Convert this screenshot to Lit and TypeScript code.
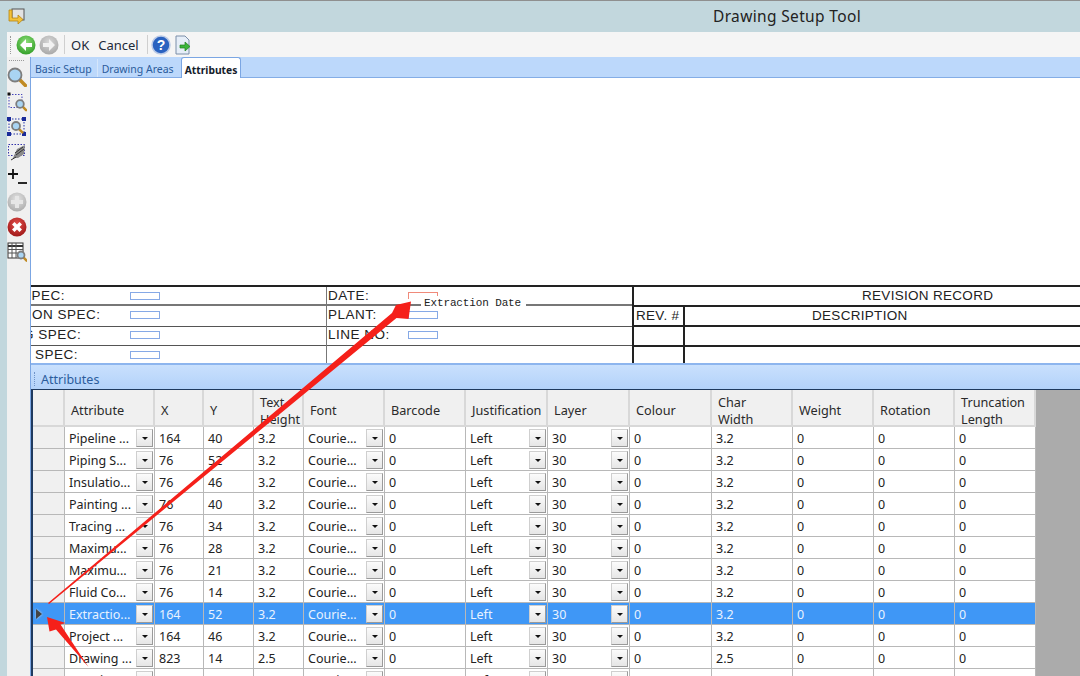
import { LitElement, html, css, svg } from 'lit'
import { customElement } from 'lit/decorators.js'
import { classMap } from 'lit/directives/class-map.js'

const rows = [
  ['Pipeline ...', '164', '40', '3.2'],
  ['Piping S...', '76', '52', '3.2'],
  ['Insulatio...', '76', '46', '3.2'],
  ['Painting ...', '76', '40', '3.2'],
  ['Tracing ...', '76', '34', '3.2'],
  ['Maximu...', '76', '28', '3.2'],
  ['Maximu...', '76', '21', '3.2'],
  ['Fluid Co...', '76', '14', '3.2'],
  ['Extractio...', '164', '52', '3.2'],
  ['Project ...', '164', '46', '3.2'],
  ['Drawing ...', '823', '14', '2.5'],
  ['Drawing ...', '823', '21', '2.5']
]

const SELECTED = 8

const ball = (a: string, b: string, glyph: unknown, size = 20) => html`
  <svg width=${size} height=${size} viewBox="0 0 20 20">
    <defs>
      <radialGradient id="g${a.slice(1)}" cx="50%" cy="35%" r="70%">
        <stop offset="0" stop-color=${a}></stop>
        <stop offset="1" stop-color=${b}></stop>
      </radialGradient>
    </defs>
    <circle cx="10" cy="10" r="9.500" fill="url(#g${a.slice(1)})"></circle>
    ${glyph}
  </svg>
`

const arrowLeft = svg`<path d="M4 10l6-6v4h6v4h-6v4z" fill="#fff"/>`
const arrowRight = svg`<path d="M16 10l-6-6v4H4v4h6v4z" fill="#f2f2f2"/>`
const plus = svg`<path d="M8 4h4v4h4v4h-4v4H8v-4H4V8h4z" fill="#e6e6e6"/>`
const cross = svg`<path d="M5 7.500L7.500 5 10 7.500 12.500 5 15 7.500 12.500 10 15 12.500 12.500 15 10 12.500 7.500 15 5 12.500 7.500 10z" fill="#fff"/>`

const lens = (cx: number, cy: number, r: number, w = 3) => svg`
  <path d="M${cx + r * 0.7} ${cy + r * 0.7}L${cx + r * 1.6} ${cy + r * 1.6}" stroke="#c08a22" stroke-width=${w} stroke-linecap="round"/>
  <circle cx=${cx} cy=${cy} r=${r} fill="#a9d4f2" stroke="#7d7d7d" stroke-width="1.800"/>
`

@customElement('app-root')
export class AppRoot extends LitElement {
  static styles = css`
    :host {
      display: flex;
      flex-direction: column;
      position: relative;
      width: 1080px;
      height: 676px;
      overflow: hidden;
      background: #c2d7dd;
      font-family: "Noto Sans", sans-serif;
      font-size: 12.5px;
      color: #222;
    }
    .titlebar {
      height: 31px;
      flex: none;
      display: flex;
      align-items: center;
      border-top: 1px solid #8f8f8f;
      padding-left: 8px;
    }
    .title {
      position: absolute;
      left: 713px;
      top: 5px;
      font-size: 15.5px;
      color: #222;
      letter-spacing: 0.35px;
    }
    .body {
      flex: 1;
      min-height: 0;
      display: flex;
      flex-direction: column;
      margin-left: 7px;
      background: #f0f0f0;
    }
    .toolbar {
      height: 25px;
      flex: none;
      display: flex;
      align-items: center;
      padding-left: 3px;
      background: #f5f5f5;
      gap: 3px;
    }
    .grip {
      width: 1px;
      height: 18px;
      border-left: 1px dotted #999;
      margin-right: 1px;
    }
    .sep {
      width: 1px;
      height: 19px;
      background: #cfcfcf;
      margin: 0 2px;
    }
    .sep.second {
      margin: 0 0 0 4px;
    }
    .toolbar span {
      font-size: 13px;
      color: #1d2a3a;
      padding: 0 1px;
    }
    .toolbar span.cancel {
      margin-left: 4px;
    }
    .main {
      flex: 1;
      min-height: 0;
      display: flex;
    }
    .side {
      width: 23px;
      flex: none;
      box-sizing: border-box;
      display: flex;
      flex-direction: column;
      align-items: center;
      padding: 10px 3px 0 0;
      gap: 5px;
      background: #f0f0f0;
      position: relative;
    }
    .side::before {
      content: '';
      position: absolute;
      left: 2px;
      top: 3px;
      width: 15px;
      border-top: 1px dotted #999;
    }
    .side svg {
      flex: none;
    }
    .content {
      flex: 1;
      min-width: 0;
      display: flex;
      flex-direction: column;
      border-left: 1px solid #7ba6e3;
    }
    .tabs {
      height: 21px;
      flex: none;
      display: flex;
      align-items: flex-end;
      background: #bcd8fb;
      border-bottom: 1px solid #84ade6;
      box-sizing: border-box;
      padding-left: 4px;
      font-size: 10.5px;
    }
    .tab {
      height: 18px;
      padding: 0 5px 0 0;
      margin-right: 4px;
      border-right: 1px solid #d5e6fb;
      color: #2b5c9c;
      line-height: 21px;
    }
    .tab.last {
      border-right: none;
      margin-right: 2px;
    }
    .tab.active {
      height: 21px;
      margin-bottom: -1px;
      box-sizing: border-box;
      padding: 0 3px;
      background: #fff;
      border: 1px solid #7ba6e3;
      border-bottom: none;
      border-radius: 3px 3px 0 0;
      color: #15202b;
      font-weight: 700;
      font-size: 10.3px;
      line-height: 25px;
    }
    .canvas {
      height: 207px;
      flex: none;
      background: #fff;
    }
    .sheet {
      height: 78px;
      flex: none;
      display: grid;
      grid-template-columns: 295px 308px 1fr;
      background: #fff;
      border-top: 2px solid #222;
      box-sizing: border-box;
      font-family: "Liberation Sans", sans-serif;
      font-size: 13.5px;
      color: #222;
      overflow: hidden;
    }
    .sheet-col {
      display: flex;
      flex-direction: column;
      min-width: 0;
    }
    .sheet-col.mid {
      border-left: 1px solid #777;
      border-right: 2px solid #222;
      box-sizing: border-box;
    }
    .sheet-row {
      height: 19px;
      box-sizing: border-box;
      flex: none;
      display: flex;
      align-items: center;
      border-bottom: 1px solid #555;
      position: relative;
      white-space: nowrap;
    }
    .sheet-row:nth-child(1) {
      border-bottom: 2px solid #777;
    }
    .sheet-row:nth-child(2) {
      height: 21px;
      padding-bottom: 3px;
    }
    .sheet-row:nth-child(3) {
      height: 19px;
      padding-bottom: 3px;
    }
    .sheet-row:last-child {
      height: 17px;
      border-bottom: none;
    }
    .label {
      width: 99px;
      flex: none;
      overflow: hidden;
      letter-spacing: 0.5px;
    }
    .label span {
      display: inline-block;
    }
    .field {
      width: 28px;
      height: 6px;
      flex: none;
      border: 1px solid #86a9e6;
      background: #fff;
    }
    .field.red {
      border-color: #f08a7a;
      border-bottom: none;
    }
    .mid .label {
      width: 81px;
      padding-left: 1px;
      box-sizing: border-box;
    }
    .extraction {
      position: absolute;
      left: 94px;
      top: 9px;
      height: 14px;
      padding: 0 5px 0 3px;
      line-height: 14px;
      background: #fff;
      font-family: "Liberation Mono", monospace;
      font-size: 11px;
      letter-spacing: -0.13px;
      color: #222;
    }
    .rev-title {
      height: 18px;
      flex: none;
      line-height: 18px;
      border-bottom: 2px solid #222;
      padding-left: 228px;
      letter-spacing: 0.3px;
      white-space: nowrap;
    }
    .rev-row {
      height: 18px;
      flex: none;
      display: grid;
      grid-template-columns: 49px 1fr;
      border-bottom: 2px solid #222;
    }
    .rev-row:last-child {
      border-bottom: none;
    }
    .rev-row div {
      line-height: 18px;
      white-space: nowrap;
    }
    .rev-row div + div {
      border-left: 2px solid #222;
      padding-left: 127px;
      letter-spacing: 0.3px;
    }
    .rev-row div:first-child {
      padding-left: 2px;
      letter-spacing: 0.3px;
    }
    .panel {
      height: 27px;
      flex: none;
      box-sizing: border-box;
      display: flex;
      align-items: center;
      padding: 4px 0 0 3px;
      gap: 5px;
      border-top: 2px solid #8db5ee;
      border-bottom: 1px solid #1f3a5f;
      background: linear-gradient(#c9e0fd, #b3d2fa);
      color: #2b5c9c;
      font-size: 12.5px;
    }
    .panel i {
      width: 1px;
      height: 14px;
      border-left: 1px dotted #6f93c8;
    }
    .grid-wrap {
      flex: 1;
      min-height: 0;
      background: #ababab;
      border-left: 2px solid #1f3a5f;
      overflow: hidden;
    }
    .row {
      display: grid;
      grid-template-columns: 32px 90px 49px 50px 50px 81px 81px 82px 82px 82px 81px 81px 81px 81px;
      width: 1003px;
      box-sizing: border-box;
    }
    .cell {
      height: 22px;
      box-sizing: border-box;
      border-right: 1px solid #b8b8b8;
      border-bottom: 1px solid #b8b8b8;
      background: #fff;
      padding-left: 4px;
      line-height: 23px;
      white-space: nowrap;
      overflow: hidden;
      position: relative;
    }
    .cell.stub {
      background: #f0f0f0;
      padding: 0;
      display: flex;
      align-items: center;
    }
    .head .cell {
      height: 37px;
      background: #f0f0f0;
      border-right: 2px solid #d8d8d8;
      border-bottom: 2px solid #d8d8d8;
      display: flex;
      align-items: center;
      line-height: 17px;
      white-space: normal;
      overflow: visible;
      padding-left: 6px;
      padding-top: 6px;
      font-size: 12.7px;
      color: #2a2a2a;
    }
    .selected .cell:not(.stub) {
      background: #3f97f6;
      color: #e8f2ff;
    }
    .selected .cell.stub {
      background: #3f97f6;
    }
    .drop {
      position: absolute;
      right: 1px;
      top: 2px;
      width: 17px;
      height: 18px;
      box-sizing: border-box;
      background: linear-gradient(#fbfbfb, #e6e6e6);
      border: 1px solid #cfcfcf;
      border-right-color: #9a9a9a;
      border-bottom-color: #9a9a9a;
      display: flex;
      align-items: center;
      justify-content: center;
    }
    .drop::after {
      content: '';
      border-left: 3px solid transparent;
      border-right: 3px solid transparent;
      border-top: 3px solid #111;
    }
    .marker {
      width: 0;
      height: 0;
      margin-left: 3px;
      border-left: 6px solid #444;
      border-top: 5px solid transparent;
      border-bottom: 5px solid transparent;
      filter: drop-shadow(0 0 1px #ddd);
    }
    .overlay {
      position: absolute;
      left: 0;
      top: 0;
      pointer-events: none;
    }
  `

  renderRow (r: string[], i: number) {
    const vals = [r[1], r[2], r[3]]
    const drop = html`<span class="drop"></span>`
    return html`
      <div class=${classMap({ row: true, selected: i === SELECTED })}>
        <div class="cell stub">${i === SELECTED ? html`<span class="marker"></span>` : ''}</div>
        <div class="cell">${r[0]}${drop}</div>
        ${vals.map(v => html`<div class="cell">${v}</div>`)}
        <div class="cell">Courie...${drop}</div>
        <div class="cell">0</div>
        <div class="cell">Left${drop}</div>
        <div class="cell">30${drop}</div>
        <div class="cell">0</div>
        <div class="cell">${r[3]}</div>
        <div class="cell">0</div>
        <div class="cell">0</div>
        <div class="cell">0</div>
      </div>
    `
  }

  renderSide () {
    return html`
      <div class="side">
        <svg width="20" height="20" viewBox="0 0 20 20">${lens(8, 8, 6.5, 3.5)}</svg>
        <svg width="20" height="20" viewBox="0 0 20 20">
          <rect x="2" y="2.500" width="13" height="13" fill="none" stroke="#4444bb" stroke-dasharray="1.500 1.500"></rect>
          <rect x="0.500" y="0.500" width="3" height="3" fill="#111"></rect>
          ${lens(13, 12, 3.8, 2.5)}
        </svg>
        <svg width="20" height="20" viewBox="0 0 20 20">
          <rect x="2" y="2" width="15" height="15" fill="none" stroke="#2233aa" stroke-dasharray="1.500 1.500"></rect>
          <path d="M0 0h4v4H0zM15 0h4v4h-4zM0 15h4v4H0zM15 15h4v4h-4z" fill="#1a2a99"></path>
          ${lens(9, 9, 4, 2.5)}
        </svg>
        <svg width="20" height="20" viewBox="0 0 20 20">
          <rect x="1.500" y="2.500" width="16" height="11" fill="none" stroke="#3333aa" stroke-dasharray="1.500 1.500"></rect>
          <path d="M6 16l4-9 8-4-1 9-6 4z" fill="#8a8a8a"></path>
          <path d="M8 11l8-6M9 13l8-6M4 18l5-3" stroke="#333" stroke-width="1" fill="none"></path>
        </svg>
        <svg width="20" height="20" viewBox="0 0 20 20">
          <path d="M1 7h10M6 2v10" stroke="#111" stroke-width="1.800"></path>
          <path d="M11 16h9" stroke="#111" stroke-width="1.800"></path>
        </svg>
        ${ball('#e4e4e4', '#a9a9a9', plus)}
        ${ball('#e3504c', '#9a1414', cross)}
        <svg width="20" height="20" viewBox="0 0 20 20">
          <rect x="1" y="1" width="15" height="15" fill="#fff" stroke="#333"></rect>
          <path d="M1 4h15" stroke="#333" stroke-width="2"></path>
          <path d="M1 7.500h15M1 11h15M5 1v15M9 1v15" stroke="#555" stroke-width="1"></path>
          ${lens(14, 13, 3.5, 2.5)}
        </svg>
      </div>
    `
  }

  renderSheet () {
    const left: [string, number][] = [
      ['SPEC:', -9],
      ['ON SPEC:', 1],
      ['G SPEC:', -8],
      ['SPEC:', 4]
    ]
    return html`
      <div class="sheet">
        <div class="sheet-col">
          ${left.map(l => html`
            <div class="sheet-row">
              <div class="label"><span style="margin-left:${l[1]}px">${l[0]}</span></div>
              <span class="field"></span>
            </div>
          `)}
        </div>
        <div class="sheet-col mid">
          <div class="sheet-row">
            <div class="label">DATE:</div><span class="field red"></span>
            <span class="extraction">Extraction Date</span>
          </div>
          <div class="sheet-row"><div class="label">PLANT:</div><span class="field"></span></div>
          <div class="sheet-row"><div class="label">LINE NO:</div><span class="field"></span></div>
          <div class="sheet-row"></div>
        </div>
        <div class="sheet-col">
          <div class="rev-title">REVISION RECORD</div>
          <div class="rev-row"><div>REV. #</div><div>DESCRIPTION</div></div>
          <div class="rev-row"><div></div><div></div></div>
          <div class="rev-row"><div></div><div></div></div>
        </div>
      </div>
    `
  }

  render () {
    const heads = [
      '',
      'Attribute',
      'X',
      'Y',
      html`Text<br>Height`,
      'Font',
      'Barcode',
      'Justification',
      'Layer',
      'Colour',
      html`Char<br>Width`,
      'Weight',
      'Rotation',
      html`Truncation<br>Length`
    ]
    return html`
      <div class="titlebar">
        <svg width="17" height="17" viewBox="0 0 17 17">
          <rect x="4" y="1" width="12" height="11" fill="#e2e2e2" stroke="#555"></rect>
          <path d="M1 2h3v8h6V7l5 4.500-5 4.500v-3H1z" fill="#f3c13a" stroke="#b88612" stroke-width="0.800"></path>
        </svg>
        <div class="title">Drawing Setup Tool</div>
      </div>
      <div class="body">
        <div class="toolbar">
          <i class="grip"></i>
          ${ball('#8fe07a', '#2c9a22', arrowLeft)}
          ${ball('#d8d8d8', '#a5a5a5', arrowRight)}
          <i class="sep"></i>
          <span>OK</span>
          <span class="cancel">Cancel</span>
          <i class="sep second"></i>
          <svg width="20" height="20" viewBox="0 0 20 20">
            <circle cx="10" cy="10" r="9" fill="#2a62c0" stroke="#b9c9e6" stroke-width="1.500"></circle>
            <text x="10" y="15" text-anchor="middle" font-family="Liberation Sans" font-weight="700" font-size="14" fill="#fff">?</text>
          </svg>
          <svg width="18" height="20" viewBox="0 0 18 20">
            <path d="M2 1h9l4 4v14H2z" fill="#e6eef8" stroke="#7a8ea8"></path>
            <path d="M6 10h5V7l5 4.500-5 4.500v-3H6z" fill="#3bb53b" stroke="#1f7f1f" stroke-width="0.700"></path>
          </svg>
        </div>
        <div class="main">
          ${this.renderSide()}
          <div class="content">
            <div class="tabs">
              <div class="tab">Basic Setup</div>
              <div class="tab last">Drawing Areas</div>
              <div class="tab active">Attributes</div>
            </div>
            <div class="canvas"></div>
            ${this.renderSheet()}
            <div class="panel"><i></i>Attributes</div>
            <div class="grid-wrap">
              <div class="row head">
                ${heads.map((h, i) => html`<div class=${i === 0 ? 'cell stub' : 'cell'}><div>${h}</div></div>`)}
              </div>
              ${rows.map((r, i) => this.renderRow(r, i))}
            </div>
          </div>
        </div>
      </div>
      <svg class="overlay" width="1080" height="676" viewBox="0 0 1080 676">
        <path d="M48 603L392 313L396 305L411 301.500L408.500 319L396.500 318L49 604Z" fill="#f5201a"></path>
        <path d="M47 617L65.500 623L60.500 624.500L88.500 667L56 629.500L49.500 631.500Z" fill="#f5201a"></path>
      </svg>
    `
  }
}
